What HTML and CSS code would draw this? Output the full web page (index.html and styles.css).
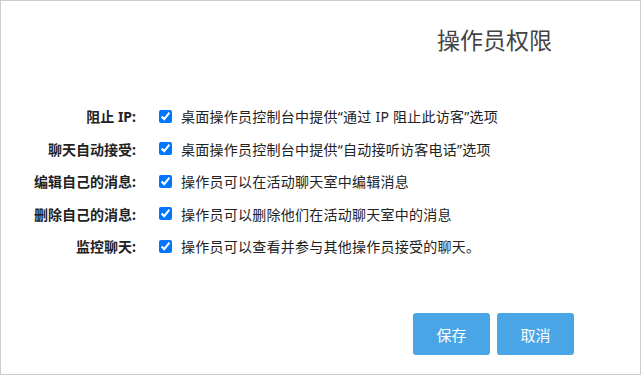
FILE: index.html
```html
<!DOCTYPE html>
<html lang="zh">
<head>
<meta charset="utf-8">
<link rel="stylesheet" href="styles.css">
</head>
<body>
<div class="dialog">
  <h1 class="title">操作员权限</h1>
  <div class="form">
    <div class="row">
      <span class="label">阻止 IP:</span>
      <input type="checkbox" class="check" checked>
      <span class="desc">桌面操作员控制台中提供“通过 IP 阻止此访客”选项</span>
    </div>
    <div class="row">
      <span class="label">聊天自动接受:</span>
      <input type="checkbox" class="check" checked>
      <span class="desc">桌面操作员控制台中提供“自动接听访客电话”选项</span>
    </div>
    <div class="row">
      <span class="label">编辑自己的消息:</span>
      <input type="checkbox" class="check" checked>
      <span class="desc">操作员可以在活动聊天室中编辑消息</span>
    </div>
    <div class="row">
      <span class="label">删除自己的消息:</span>
      <input type="checkbox" class="check" checked>
      <span class="desc">操作员可以删除他们在活动聊天室中的消息</span>
    </div>
    <div class="row">
      <span class="label">监控聊天:</span>
      <input type="checkbox" class="check" checked>
      <span class="desc">操作员可以查看并参与其他操作员接受的聊天。</span>
    </div>
  </div>
  <div class="actions">
    <button class="btn">保存</button>
    <button class="btn">取消</button>
  </div>
</div>
</body>
</html>
```

FILE: styles.css
```css
html, body {
  margin: 0;
  padding: 0;
  background: #fff;
}
body {
  font-family: "Noto Sans", "Noto Sans CJK SC", sans-serif;
  color: #222;
}
.dialog {
  box-sizing: border-box;
  width: 641px;
  height: 375px;
  border: 1px solid #cccccc;
  display: flex;
  flex-direction: column;
}
.title {
  margin: 0;
  padding: 21px 0 0 436px;
  font-family: "Noto Sans CJK SC", sans-serif;
  font-size: 23px;
  font-weight: 400;
  line-height: 34px;
  color: #444;
}
.form {
  margin-top: 50px;
  display: flex;
  flex-direction: column;
  gap: 12px;
}
.row {
  display: flex;
  align-items: center;
  height: 20.5px;
}
.label {
  width: 135px;
  text-align: right;
  font-size: 14px;
  font-weight: 700;
  color: #222;
  white-space: nowrap;
}
.check {
  margin: 0 0 0 23px;
  width: 13px;
  height: 13px;
  accent-color: #0075ff;
}
.desc {
  margin-left: 9px;
  font-size: 14px;
  letter-spacing: 0.25px;
  color: #222;
  white-space: nowrap;
}
.actions {
  margin-top: auto;
  margin-bottom: 19px;
  margin-right: 66px;
  display: flex;
  justify-content: flex-end;
  gap: 7px;
}
.btn {
  width: 77px;
  height: 42px;
  border: none;
  border-radius: 3px;
  background: #4aa5e6;
  color: #fff;
  font-family: "Noto Sans CJK SC", sans-serif;
  font-size: 15px;
  padding: 0;
}
```
